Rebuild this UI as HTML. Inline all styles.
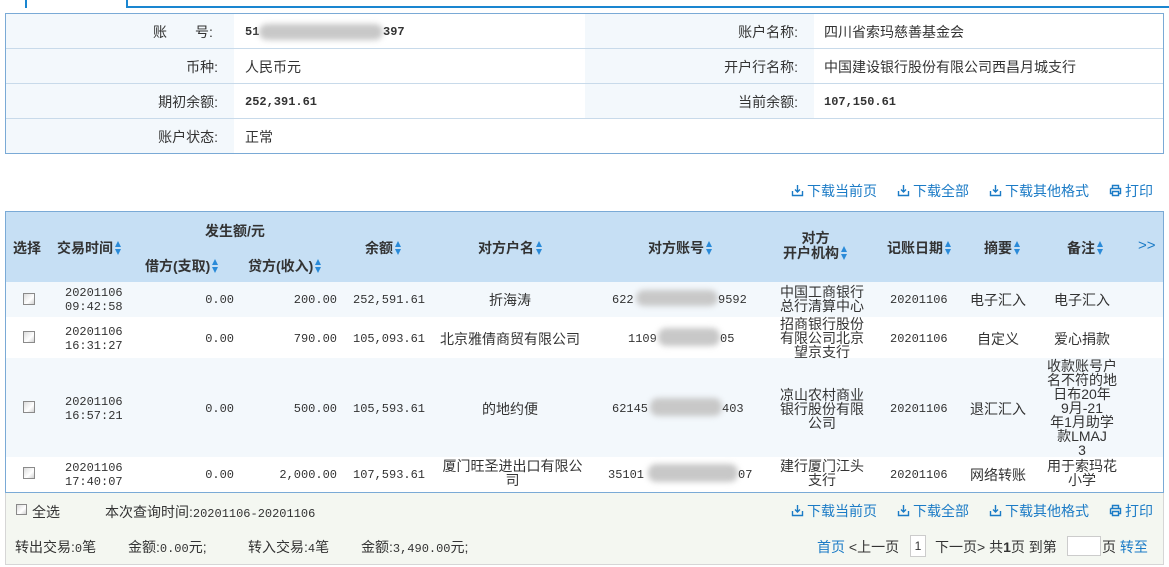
<!DOCTYPE html>
<html><head><meta charset="utf-8"><style>
*{margin:0;padding:0;box-sizing:border-box}
body{width:1169px;height:567px;background:#fff;position:relative;overflow:hidden;font-family:"Liberation Sans","Noto Sans CJK SC","WenQuanYi Zen Hei",sans-serif;font-size:14px;color:#333}
.a{position:absolute;white-space:nowrap}
.m{font-family:"Liberation Mono","Noto Sans CJK SC",monospace;font-size:12px}
.b{font-weight:bold}
.lnk{color:#1b7bc6;font-size:14px}
.c{text-align:center}
.r{text-align:right}
.cb{position:absolute;width:12px;height:12px;border:1px solid #8a8a8a;background:linear-gradient(135deg,#dcdcdc,#fff 60%,#d0d0d0)}
.arr{display:inline-block;width:7px;height:14px;vertical-align:-2px;margin-left:2px;position:relative}
.arr:before{content:"";position:absolute;left:0;top:0;border-left:3.5px solid transparent;border-right:3.5px solid transparent;border-bottom:6px solid #2a8ad8}
.arr:after{content:"";position:absolute;left:0;top:8px;border-left:3.5px solid transparent;border-right:3.5px solid transparent;border-top:6px solid #2a8ad8}
.blur{position:absolute;background:#c8c8c8;filter:blur(3px);border-radius:8px}
svg.i{width:13px;height:13px;vertical-align:-1px;margin-right:3px}
.ml{line-height:14px}
</style></head><body>
<div class="a" style="left:25px;top:0;width:2px;height:8px;background:#1a86d0"></div>
<div class="a" style="left:126px;top:0;width:2px;height:8px;background:#1a86d0"></div>
<div class="a" style="left:126px;top:6px;width:1043px;height:2px;background:#1a86d0"></div>

<div class="a" style="left:5px;top:13px;width:1159px;height:141px;border:1px solid #7aaad6"></div>
<div class="a" style="left:6px;top:14px;width:228px;height:139px;background:#f3f8fc"></div>
<div class="a" style="left:585px;top:14px;width:229px;height:104px;background:#f3f8fc"></div>
<div class="a" style="left:6px;top:48px;width:1157px;height:1px;background:#c8daea"></div>
<div class="a" style="left:6px;top:83px;width:1157px;height:1px;background:#c8daea"></div>
<div class="a" style="left:6px;top:118px;width:1157px;height:1px;background:#c8daea"></div>
<div class="a" style="left:153px;top:22px">账</div><div class="a" style="left:195px;top:22px">号:</div>
<div class="a r" style="left:100px;width:118px;top:57px">币种:</div>
<div class="a r" style="left:100px;width:118px;top:92px">期初余额:</div>
<div class="a r" style="left:100px;width:118px;top:127px">账户状态:</div>
<div class="a m b" style="left:245px;top:25px">51</div>
<div class="blur" style="left:259px;top:24px;width:124px;height:16px"></div>
<div class="a m b" style="left:383px;top:25px">397</div>
<div class="a" style="left:245px;top:57px">人民币元</div>
<div class="a m b" style="left:245px;top:95px">252,391.61</div>
<div class="a" style="left:245px;top:127px">正常</div>
<div class="a r" style="left:680px;width:118px;top:22px">账户名称:</div>
<div class="a r" style="left:680px;width:118px;top:57px">开户行名称:</div>
<div class="a r" style="left:680px;width:118px;top:92px">当前余额:</div>
<div class="a" style="left:824px;top:22px">四川省索玛慈善基金会</div>
<div class="a" style="left:824px;top:57px">中国建设银行股份有限公司西昌月城支行</div>
<div class="a m b" style="left:824px;top:95px">107,150.61</div>

<svg width="0" height="0" style="position:absolute"><defs>
<symbol id="dl" viewBox="0 0 13 13"><path d="M1.5 7v4.5h10V7M6.5 1v7M4 5.5l2.5 2.5 2.5-2.5" fill="none" stroke="#1b7bc6" stroke-width="1.4"/></symbol>
<symbol id="pt" viewBox="0 0 13 13"><path d="M3.5 4V1.5h6V4M1.5 4.5h10v5h-2M3.5 9.5h-2v-5M3.5 7.5h6v4h-6z" fill="none" stroke="#1b7bc6" stroke-width="1.4"/></symbol>
</defs></svg>

<div class="a lnk" style="left:791px;top:181px"><svg class="i"><use href="#dl"/></svg>下载当前页</div>
<div class="a lnk" style="left:897px;top:181px"><svg class="i"><use href="#dl"/></svg>下载全部</div>
<div class="a lnk" style="left:989px;top:181px"><svg class="i"><use href="#dl"/></svg>下载其他格式</div>
<div class="a lnk" style="left:1109px;top:181px"><svg class="i"><use href="#pt"/></svg>打印</div>

<div class="a" style="left:5px;top:211px;width:1159px;height:282px;border:1px solid #7aaad6"></div>
<div class="a" style="left:6px;top:212px;width:1157px;height:70px;background:#c6dff4"></div>
<div class="a" style="left:6px;top:282px;width:1157px;height:35px;background:#f3f8fc"></div>
<div class="a" style="left:6px;top:358px;width:1157px;height:99px;background:#f3f8fc"></div>
<div style="font-weight:bold;font-size:14px;color:#333">
<div class="a" style="left:13px;top:238px">选择</div>
<div class="a" style="left:57px;top:238px">交易时间<span class="arr"></span></div>
<div class="a" style="left:205px;top:221px">发生额/元</div>
<div class="a" style="left:145px;top:256px">借方(支取)<span class="arr"></span></div>
<div class="a" style="left:248px;top:256px">贷方(收入)<span class="arr"></span></div>
<div class="a" style="left:365px;top:238px">余额<span class="arr"></span></div>
<div class="a" style="left:478px;top:238px">对方户名<span class="arr"></span></div>
<div class="a" style="left:648px;top:238px">对方账号<span class="arr"></span></div>
<div class="a c" style="left:783px;top:231px;line-height:15px">对方<br>开户机构<span class="arr"></span></div>
<div class="a" style="left:887px;top:238px">记账日期<span class="arr"></span></div>
<div class="a" style="left:984px;top:238px">摘要<span class="arr"></span></div>
<div class="a" style="left:1067px;top:238px">备注<span class="arr"></span></div>
<div class="a" style="left:1138px;top:237px;color:#1b7bc6;font-weight:normal;font-size:15px">&gt;&gt;</div>
</div>

<div class="cb" style="left:23px;top:293px"></div>
<div class="a m ml" style="left:65px;top:286px">20201106<br>09:42:58</div>
<div class="a m r" style="left:150px;width:84px;top:293px">0.00</div>
<div class="a m r" style="left:250px;width:87px;top:293px">200.00</div>
<div class="a m" style="left:353px;top:293px">252,591.61</div>
<div class="a c" style="left:430px;width:160px;top:290px">折海涛</div>
<div class="a m" style="left:612px;top:293px">622</div><div class="blur" style="left:636px;top:290px;width:82px;height:16px"></div><div class="a m" style="left:718px;top:293px">9592</div>
<div class="a c ml" style="left:762px;width:120px;top:285px">中国工商银行<br>总行清算中心</div>
<div class="a m" style="left:890px;top:293px">20201106</div>
<div class="a c" style="left:958px;width:80px;top:290px">电子汇入</div>
<div class="a c" style="left:1042px;width:80px;top:290px">电子汇入</div>

<div class="cb" style="left:23px;top:331px"></div>
<div class="a m ml" style="left:65px;top:325px">20201106<br>16:31:27</div>
<div class="a m r" style="left:150px;width:84px;top:332px">0.00</div>
<div class="a m r" style="left:250px;width:87px;top:332px">790.00</div>
<div class="a m" style="left:353px;top:332px">105,093.61</div>
<div class="a c" style="left:430px;width:160px;top:329px">北京雅倩商贸有限公司</div>
<div class="a m" style="left:628px;top:332px">1109</div><div class="blur" style="left:658px;top:328px;width:62px;height:18px"></div><div class="a m" style="left:720px;top:332px">05</div>
<div class="a c ml" style="left:762px;width:120px;top:317px">招商银行股份<br>有限公司北京<br>望京支行</div>
<div class="a m" style="left:890px;top:332px">20201106</div>
<div class="a c" style="left:958px;width:80px;top:329px">自定义</div>
<div class="a c" style="left:1042px;width:80px;top:329px">爱心捐款</div>

<div class="cb" style="left:23px;top:401px"></div>
<div class="a m ml" style="left:65px;top:395px">20201106<br>16:57:21</div>
<div class="a m r" style="left:150px;width:84px;top:402px">0.00</div>
<div class="a m r" style="left:250px;width:87px;top:402px">500.00</div>
<div class="a m" style="left:353px;top:402px">105,593.61</div>
<div class="a c" style="left:430px;width:160px;top:399px">的地约便</div>
<div class="a m" style="left:612px;top:402px">62145</div><div class="blur" style="left:650px;top:398px;width:72px;height:18px"></div><div class="a m" style="left:722px;top:402px">403</div>
<div class="a c ml" style="left:762px;width:120px;top:388px">凉山农村商业<br>银行股份有限<br>公司</div>
<div class="a m" style="left:890px;top:402px">20201106</div>
<div class="a c" style="left:958px;width:80px;top:399px">退汇汇入</div>
<div class="a c ml" style="left:1042px;width:80px;top:359px">收款账号户<br>名不符的地<br>日布20年<br>9月-21<br>年1月助学<br>款LMAJ<br>3</div>

<div class="cb" style="left:23px;top:467px"></div>
<div class="a m ml" style="left:65px;top:461px">20201106<br>17:40:07</div>
<div class="a m r" style="left:150px;width:84px;top:468px">0.00</div>
<div class="a m r" style="left:250px;width:87px;top:468px">2,000.00</div>
<div class="a m" style="left:353px;top:468px">107,593.61</div>
<div class="a c ml" style="left:430px;width:165px;top:459px">厦门旺圣进出口有限公<br>司</div>
<div class="a m" style="left:608px;top:468px">35101</div><div class="blur" style="left:648px;top:464px;width:90px;height:18px"></div><div class="a m" style="left:738px;top:468px">07</div>
<div class="a c ml" style="left:762px;width:120px;top:459px">建行厦门江头<br>支行</div>
<div class="a m" style="left:890px;top:468px">20201106</div>
<div class="a c" style="left:958px;width:80px;top:465px">网络转账</div>
<div class="a c ml" style="left:1042px;width:80px;top:459px">用于索玛花<br>小学</div>

<div class="a" style="left:5px;top:493px;width:1159px;height:72px;background:#f4f7f1;border:1px solid #d6d6d6;border-top:none"></div>
<div class="cb" style="left:16px;top:504px;width:11px;height:11px"></div>
<div class="a" style="left:32px;top:502px">全选</div>
<div class="a" style="left:105px;top:502px">本次查询时间:<span class="m">20201106-20201106</span></div>
<div class="a lnk" style="left:791px;top:501px"><svg class="i"><use href="#dl"/></svg>下载当前页</div>
<div class="a lnk" style="left:897px;top:501px"><svg class="i"><use href="#dl"/></svg>下载全部</div>
<div class="a lnk" style="left:989px;top:501px"><svg class="i"><use href="#dl"/></svg>下载其他格式</div>
<div class="a lnk" style="left:1109px;top:501px"><svg class="i"><use href="#pt"/></svg>打印</div>
<div class="a" style="left:15px;top:537px">转出交易:<span class="m">0</span>笔</div>
<div class="a" style="left:128px;top:537px">金额:<span class="m">0.00</span>元;</div>
<div class="a" style="left:248px;top:537px">转入交易:<span class="m">4</span>笔</div>
<div class="a" style="left:361px;top:537px">金额:<span class="m">3,490.00</span>元;</div>
<div class="a" style="left:817px;top:537px"><span style="color:#1b7bc6">首页</span> &lt;上一页</div>
<div class="a" style="left:910px;top:535px;width:16px;height:22px;border:1px solid #ccc;background:#fff;text-align:center;line-height:20px;font-size:12px">1</div>
<div class="a" style="left:935px;top:537px">下一页&gt; 共<b>1</b>页 到第</div>
<div class="a" style="left:1067px;top:536px;width:34px;height:20px;border:1px solid #ccc;background:#fff"></div>
<div class="a" style="left:1102px;top:537px">页 <span style="color:#1b7bc6">转至</span></div>
</body></html>
